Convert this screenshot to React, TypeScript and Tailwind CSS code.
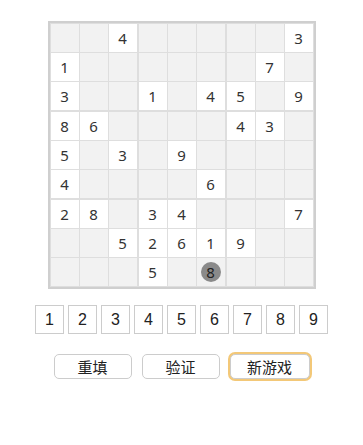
const BOARD = [
  "__4_____3",
  "1______7_",
  "3__1_45_9",
  "86____43_",
  "5_3_9____",
  "4____6___",
  "28_34___7",
  "__52619__",
  "___5_____",
];

const SELECTED = { row: 8, col: 5, value: "8" };

function Cell({ row, col }: { row: number; col: number }) {
  const ch = BOARD[row][col];
  const filled = ch !== "_";
  const selected = SELECTED.row === row && SELECTED.col === col;
  return (
    <div
      className={`w-[28px] h-[28px] flex items-center justify-center text-[15px] text-[#333] ${
        filled ? "bg-white" : "bg-[#f2f2f2]"
      }`}
    >
      {filled && ch}
      {selected && (
        <span className="w-5 h-5 rounded-full bg-[#8a8a8a] flex items-center justify-center text-[#222] leading-none">
          {SELECTED.value}
        </span>
      )}
    </div>
  );
}

function Board() {
  const bands = [0, 1, 2];
  return (
    <div className="border-2 border-[#cfcfcf] bg-[#dedede] flex flex-col gap-[2px] p-px font-['Noto_Sans',sans-serif]">
      {bands.map((b) => (
        <div key={b} className="flex flex-col gap-px">
          {[0, 1, 2].map((r) => {
            const row = b * 3 + r;
            return (
              <div key={row} className="flex gap-[2px]">
                {[0, 1, 2].map((g) => (
                  <div key={g} className="flex gap-px">
                    {[0, 1, 2].map((c) => (
                      <Cell key={c} row={row} col={g * 3 + c} />
                    ))}
                  </div>
                ))}
              </div>
            );
          })}
        </div>
      ))}
    </div>
  );
}

export default function App() {
  return (
    <div className="w-[363px] h-[445px] bg-white flex flex-col items-center pt-[21px]">
      <Board />

      <div className="mt-[16px] flex gap-1 font-['Liberation_Sans',Arial,sans-serif]">
        {[1, 2, 3, 4, 5, 6, 7, 8, 9].map((n) => (
          <button
            key={n}
            type="button"
            className="w-[29px] h-[29px] border border-[#cccccc] bg-white text-[16px] text-[#222] flex items-center justify-center"
          >
            {n}
          </button>
        ))}
      </div>

      <div className="mt-[20px] flex gap-[10px] font-['Noto_Sans_CJK_SC',sans-serif] text-[15px] text-[#222]">
        <button type="button" className="w-[78px] h-[25px] rounded-[5px] border border-[#cccccc] bg-white flex items-center justify-center leading-none">
          重填
        </button>
        <button type="button" className="w-[78px] h-[25px] rounded-[5px] border border-[#cccccc] bg-white flex items-center justify-center leading-none">
          验证
        </button>
        <button type="button" className="w-[80px] h-[25px] rounded-[5px] border border-[#cccccc] bg-white flex items-center justify-center leading-none ring-2 ring-[#f3c878]">
          新游戏
        </button>
      </div>
    </div>
  );
}
